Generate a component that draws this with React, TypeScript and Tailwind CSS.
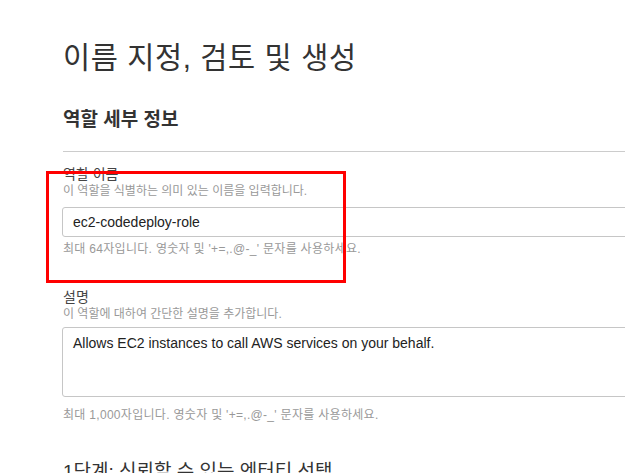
import React from "react";

const font = { fontFamily: '"Liberation Sans", "Noto Sans CJK KR", sans-serif' };

export default function App() {
  return (
    <div
      className="w-[625px] h-[473px] overflow-hidden bg-white text-[#333]"
      style={font}
    >
      <div className="pl-[63px] pt-[38px]">
        <h1 className="text-[29.5px] leading-[40px] font-normal text-[#333] tracking-[0.6px] whitespace-nowrap">
          이름 지정, 검토 및 생성
        </h1>
        <h2 className="mt-[30px] text-[19px] leading-[24px] font-bold text-[#333] whitespace-nowrap">
          역할 세부 정보
        </h2>
        <div className="mt-[19px] h-px bg-[#cccccc] w-[700px]" />

        <div className="relative mt-[13px]">
          <div className="absolute left-[-17px] top-[6px] w-[300px] h-[112px] border-[3px] border-[#ff0000] z-10 pointer-events-none" />
          <div className="text-[14px] leading-[18px] text-[#444] whitespace-nowrap">역할 이름</div>
          <div className="text-[12px] leading-[16px] text-[#999] whitespace-nowrap">
            이 역할을 식별하는 의미 있는 이름을 입력합니다.
          </div>
          <div className="mt-[8px] ml-[-1px] w-[700px] h-[30px] border border-[#c6c6c6] rounded-[3px] flex items-center pl-[10px] text-[14px] text-[#222] whitespace-nowrap">
            ec2-codedeploy-role
          </div>
          <div className="mt-[4px] text-[12px] leading-[16px] text-[#999] tracking-[0.3px] whitespace-nowrap">
            최대 64자입니다. 영숫자 및 '+=,.@-_' 문자를 사용하세요.
          </div>
        </div>

        <div className="mt-[31px]">
          <div className="text-[14px] leading-[18px] text-[#444] whitespace-nowrap">설명</div>
          <div className="text-[12px] leading-[16px] text-[#999] whitespace-nowrap">
            이 역할에 대하여 간단한 설명을 추가합니다.
          </div>
          <div className="mt-[5px] ml-[-1px] w-[700px] h-[70px] border border-[#c6c6c6] rounded-[3px] pl-[10px] pt-[6px] text-[14px] leading-[18px] text-[#222] whitespace-nowrap">
            Allows EC2 instances to call AWS services on your behalf.
          </div>
          <div className="mt-[10px] text-[12px] leading-[16px] text-[#999] tracking-[0.3px] whitespace-nowrap">
            최대 1,000자입니다. 영숫자 및 '+=,.@-_' 문자를 사용하세요.
          </div>
        </div>

        <h2 className="mt-[36px] text-[19px] leading-[26px] font-normal text-[#333] whitespace-nowrap">
          1단계: 신뢰할 수 있는 엔터티 선택
        </h2>
      </div>
    </div>
  );
}
